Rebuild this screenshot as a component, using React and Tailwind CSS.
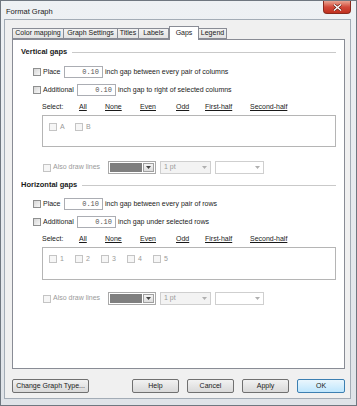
import React from 'react';

const font = { fontFamily: '"Liberation Sans", Arial, sans-serif' };

const Check = ({ disabled }) => (
  <span
    className={`inline-block w-[8px] h-[8px] shrink-0 border ${
      disabled ? 'border-[#c4c4c4] bg-[#f6f6f6]' : 'border-[#8e8f8f] bg-gradient-to-br from-[#d6d6d6] to-[#f8f8f8]'
    }`}
  />
);

const Heading = ({ text }) => (
  <div className="flex items-center h-[10px]">
    <span className="font-bold text-[7.5px] text-[#1a1a1a] whitespace-nowrap">{text}</span>
    <div className="flex-1 ml-[5px] border-t border-[#c9c9c9]" />
  </div>
);

const Field = ({ label, labelWidth, suffix, mt }) => (
  <div className={`flex items-center h-[12px] ml-[12px] ${mt}`}>
    <div className="flex items-center" style={{ width: labelWidth }}>
      <Check />
      <span className="ml-[2px] text-[7px] text-[#1a1a1a]">{label}</span>
    </div>
    <div className="w-[39px] h-[12px] border border-[#abadb3] bg-white flex items-center justify-end pr-[3px]">
      <span className="text-[7px] text-[#555]" style={{ fontFamily: '"Liberation Mono", monospace' }}>0.10</span>
    </div>
    <span className="ml-[2px] text-[7px] text-[#1a1a1a] whitespace-nowrap">{suffix}</span>
  </div>
);

const SelectRow = ({ mt }) => {
  const links = [
    ['All', 'w-[26px]'],
    ['None', 'w-[35px]'],
    ['Even', 'w-[36px]'],
    ['Odd', 'w-[29px]'],
    ['First-half', 'w-[45px]'],
    ['Second-half', ''],
  ];
  return (
    <div className={`flex items-center h-[10px] ml-[21px] text-[7px] text-[#1a1a1a] ${mt}`}>
      <span className="w-[37px]">Select:</span>
      {links.map(([t, w]) => (
        <span key={t} className={`${w} underline`}>{t}</span>
      ))}
    </div>
  );
};

const ListBox = ({ items, h }) => (
  <div className={`ml-[21px] mt-[3px] ${h} border border-[#b5b5b5] bg-white pt-[6px] pl-[6px] flex items-start`}>
    {items.map((it) => (
      <div key={it} className="w-[26px] flex items-center">
        <Check disabled />
        <span className="ml-[3px] text-[7px] text-[#9a9a9a]">{it}</span>
      </div>
    ))}
  </div>
);

const Arrow = ({ color }) => (
  <svg width="5" height="3" viewBox="0 0 5 3">
    <path d="M0 0 L5 0 L2.5 3 Z" fill={color} />
  </svg>
);

const LinesRow = ({ mt }) => (
  <div className={`flex items-center h-[13px] ml-[22px] ${mt}`}>
    <div className="flex items-center w-[65px]">
      <Check disabled />
      <span className="ml-[2px] text-[7px] text-[#9a9a9a] whitespace-nowrap">Also draw lines</span>
    </div>
    <div className="w-[48px] h-[13px] border border-[#a9a9a9] bg-white flex p-[1px]">
      <div className="flex-1 bg-[#7f7f7f]" />
      <div className="w-[11px] ml-[1px] border border-[#a0a0a0] bg-gradient-to-b from-[#f4f4f4] to-[#dcdcdc] flex items-center justify-center">
        <Arrow color="#444" />
      </div>
    </div>
    <div className="ml-[4px] w-[51px] h-[13px] border border-[#cfcfcf] bg-[#f3f3f3] flex items-center justify-between px-[3px]">
      <span className="text-[7px] text-[#9a9a9a]">1 pt</span>
      <Arrow color="#b0b0b0" />
    </div>
    <div className="ml-[4px] w-[49px] h-[13px] border border-[#cfcfcf] bg-white flex items-center justify-end px-[3px]">
      <Arrow color="#b0b0b0" />
    </div>
  </div>
);

const Btn = ({ children, w, primary }) => (
  <div
    className={`${w} h-[14px] rounded-[2px] border flex items-center justify-center text-[7px] text-[#1a1a1a] ${
      primary
        ? 'border-[#3c7fb1] bg-gradient-to-b from-[#eaf6fd] to-[#bee6fd]'
        : 'border-[#707070] bg-gradient-to-b from-[#f2f2f2] to-[#d9d9d9]'
    }`}
  >
    {children}
  </div>
);

const tabs = [
  ['Color mapping', 'w-[52px]'],
  ['Graph Settings', 'w-[55px]'],
  ['Titles', 'w-[22px]'],
  ['Labels', 'w-[31px]'],
  ['Gaps', 'w-[30px]'],
  ['Legend', 'w-[29px]'],
];

export default function App() {
  return (
    <div
      className="w-[357px] h-[406px] flex flex-col border border-[#6f7780] bg-gradient-to-b from-[#eef1f4] to-[#dfe3e8]"
      style={font}
    >
      {/* title bar */}
      <div className="h-[18px] flex items-start justify-between shrink-0">
        <span className="ml-[5px] mt-[5px] text-[7.5px] text-[#1a1a1a]">Format Graph</span>
        <div className="mr-[5px] w-[28px] h-[13px] rounded-b-[4px] border border-t-0 border-[#8a2a1e] bg-gradient-to-b from-[#e8a493] via-[#d2493a] to-[#c0301f] flex items-center justify-center">
          <svg width="9" height="7" viewBox="0 0 9 7">
            <path d="M1 0.5 L8 6.5 M8 0.5 L1 6.5" stroke="#5a1a10" strokeWidth="2.6" />
            <path d="M1 0.5 L8 6.5 M8 0.5 L1 6.5" stroke="#fff" strokeWidth="1.4" />
          </svg>
        </div>
      </div>

      {/* client area */}
      <div className="ml-[3px] mr-[5px] h-[380px] border border-[#a3acb6] bg-[#f0f0f0] flex flex-col pt-[6px] pl-[7px] pr-[5px]">
        <div className="flex items-end h-[13px] relative z-10">
          {tabs.map(([t, w]) =>
            t === 'Gaps' ? (
              <div
                key={t}
                className={`${w} h-[14px] -mb-px border border-b-0 border-[#898c95] bg-white flex items-center justify-center text-[7px] text-[#1a1a1a]`}
              >
                {t}
              </div>
            ) : (
              <div
                key={t}
                className={`${w} h-[11px] border border-[#898c95] -ml-px first:ml-0 bg-gradient-to-b from-[#f2f2f2] to-[#e3e3e3] flex items-center justify-center text-[7px] text-[#1a1a1a] whitespace-nowrap`}
              >
                {t}
              </div>
            )
          )}
        </div>

        {/* tab panel */}
        <div className="h-[330px] border border-[#898c95] bg-white pt-[7px] px-[8px] flex flex-col">
          <Heading text="Vertical gaps" />
          <Field label="Place" labelWidth="31px" suffix="inch gap between every pair of columns" mt="mt-[9px]" />
          <Field label="Additional" labelWidth="44px" suffix="inch gap to right of selected columns" mt="mt-[6px]" />
          <SelectRow mt="mt-[6px]" />
          <ListBox items={['A', 'B']} h="h-[32px]" />
          <LinesRow mt="mt-[14px]" />

          <div className="mt-[6px]">
            <Heading text="Horizontal gaps" />
          </div>
          <Field label="Place" labelWidth="31px" suffix="inch gap between every pair of rows" mt="mt-[8px]" />
          <Field label="Additional" labelWidth="44px" suffix="inch gap under selected rows" mt="mt-[6px]" />
          <SelectRow mt="mt-[6px]" />
          <ListBox items={['1', '2', '3', '4', '5']} h="h-[33px]" />
          <LinesRow mt="mt-[12px]" />
        </div>

        {/* buttons */}
        <div className="mt-[10px] flex items-center justify-between">
          <Btn w="w-[77px]">Change Graph Type...</Btn>
          <div className="flex gap-[8px]">
            <Btn w="w-[47px]">Help</Btn>
            <Btn w="w-[47px]">Cancel</Btn>
            <Btn w="w-[47px]">Apply</Btn>
            <Btn w="w-[48px]" primary>OK</Btn>
          </div>
        </div>
      </div>
    </div>
  );
}
